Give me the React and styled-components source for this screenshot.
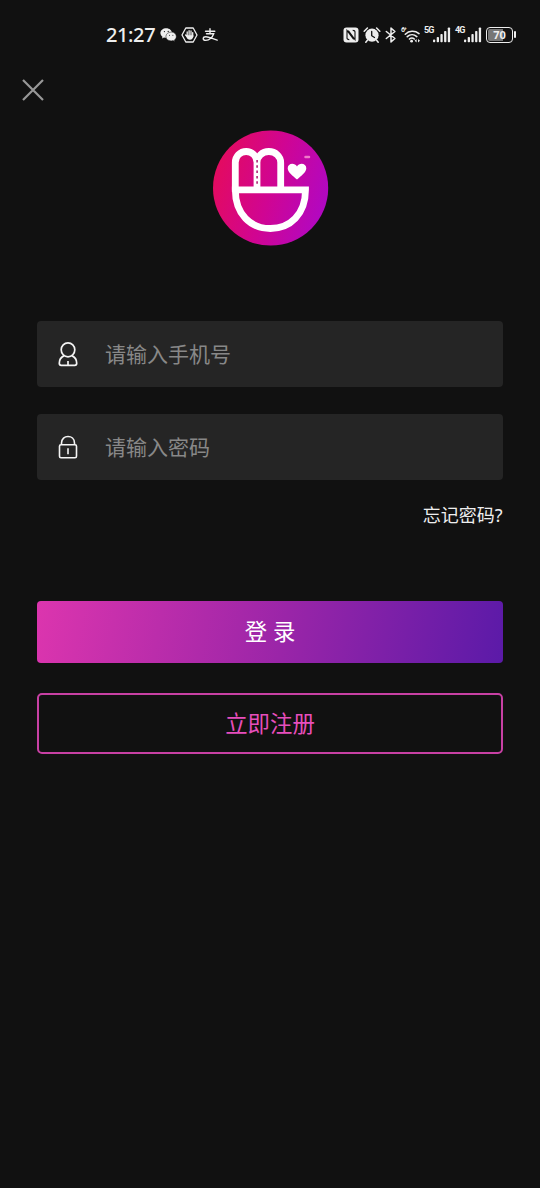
import React, { useState } from "react";
import styled, { createGlobalStyle } from "styled-components";

function SignalIcon() {
  return (
    <svg width="18" height="16" viewBox="0 0 18 16" fill="#eee">
      <rect x="0" y="12.5" width="2.2" height="2.7" rx="0.8" />
      <rect x="3.7" y="10" width="2.3" height="5.2" rx="0.8" />
      <rect x="7.4" y="7" width="2.3" height="8.2" rx="0.8" />
      <rect x="11.1" y="4" width="2.3" height="11.2" rx="0.8" />
      <rect x="14.8" y="0.5" width="2.3" height="14.7" rx="0.8" />
    </svg>
  );
}

function StatusBar() {
  return (
    <Status>
      <Clock>21:27</Clock>
      <NoticeIcons>
        {/* wechat */}
        <svg width="17" height="16" viewBox="0 0 17 16">
          <path
            d="M6.3 1.2C3 1.2.4 3.3.4 6c0 1.5.8 2.8 2.1 3.7L2 11.4l2-1c.7.2 1.5.3 2.3.3C9.5 10.7 12 8.6 12 6S9.5 1.2 6.3 1.2z"
            fill="#eee"
          />
          <path
            d="M11.2 5.1c-3 0-5.3 1.9-5.3 4.4s2.3 4.4 5.3 4.4c.7 0 1.3-.1 1.9-.3l1.7.9-.4-1.5c1.2-.8 1.9-2 1.9-3.5 0-2.5-2.2-4.4-5.1-4.4z"
            fill="#eee"
            stroke="#111"
            strokeWidth="0.5"
          />
          <g fill="#111">
            <circle cx="4.4" cy="4.6" r="0.6" />
            <circle cx="8.2" cy="4.4" r="0.6" />
            <circle cx="9.5" cy="8.3" r="0.5" />
            <circle cx="12.9" cy="8.3" r="0.5" />
          </g>
        </svg>
        {/* hand in hexagon */}
        <svg width="17" height="16" viewBox="0 0 17 16">
          <path
            d="M4.8 1h7.4L16 8l-3.8 7H4.8L1 8z"
            fill="none"
            stroke="#eee"
            strokeWidth="1.3"
            strokeLinejoin="round"
          />
          <path
            d="M6.2 5v4M8.1 3.7v5M10 4v5M11.7 5.6v4M4.6 8l1.8 2"
            fill="none"
            stroke="#eee"
            strokeWidth="1.3"
            strokeLinecap="round"
          />
          <path d="M5.5 8.2h6.9c0 2.8-1.3 4.5-3.5 4.5-1.8 0-2.8-1.1-3.4-2.8z" fill="#eee" />
        </svg>
        {/* alipay */}
        <svg
          width="16"
          height="16"
          viewBox="0 0 16 16"
          fill="none"
          stroke="#eee"
          strokeWidth="1.4"
          strokeLinecap="round"
        >
          <path d="M3.5 4.2h9.300M8 1.700v5M4.500 6.800h7.200C10.600 10 7.600 13.400 3.700 13.400c-3.300 0-3.300-3.600.2-3.600 3.500 0 7 2.300 11.300 3.300" />
        </svg>
      </NoticeIcons>
      <SystemIcons>
        {/* nfc */}
        <svg width="16" height="16" viewBox="0 0 16 16">
          <rect x="0.5" y="0.5" width="15" height="15" rx="3" fill="#eee" />
          <path
            d="M6.3 12.6c-1.5 0-2.3-.4-2.3-1.6V3.400l6.700 8.900M9.700 3.400c1.600 0 2.300.4 2.300 1.600v7.600L5.300 3.700"
            fill="none"
            stroke="#111"
            strokeWidth="1.1"
          />
        </svg>
        {/* alarm */}
        <svg width="18" height="16" viewBox="0 0 18 16">
          <circle cx="9" cy="8.2" r="6.6" fill="#eee" />
          <path
            d="M1.2 4.2L4.4 1M16.8 4.2L13.6 1M4.4 13.2l-1.6 2M13.6 13.2l1.6 2"
            stroke="#eee"
            strokeWidth="1.5"
            strokeLinecap="round"
          />
          <path
            d="M8.7 4.5v4.200l2.800 1.800"
            fill="none"
            stroke="#111"
            strokeWidth="1.3"
            strokeLinecap="round"
          />
        </svg>
        {/* bluetooth */}
        <svg width="12" height="16" viewBox="0 0 12 16">
          <path
            d="M1.3 4.5l8.6 7L6 14.900V1.100l3.900 3.400-8.600 7"
            fill="none"
            stroke="#eee"
            strokeWidth="1.5"
            strokeLinejoin="round"
            strokeLinecap="round"
          />
        </svg>
        <Network>
          <Tag $width={2} $size={7}>6⁺</Tag>
          <svg width="17" height="16" viewBox="0 0 17 16">
            <path
              d="M2.300 7.200C6 3.600 11.800 3.300 16 6.600M4.300 9.700c2.700-2.500 6.700-2.500 9.500-.1M6.500 12c1.500-1.300 3.300-1.300 4.800 0"
              fill="none"
              stroke="#eee"
              strokeWidth="1.6"
              strokeLinecap="round"
            />
            <circle cx="8.6" cy="14.2" r="1.4" fill="#eee" />
            <path d="M11.6 13.700l2-1.700v3.400zM17 13.700l-2-1.700v3.400z" fill="#eee" />
          </svg>
        </Network>
        <Network>
          <Tag $width={9} $size={9}>5G</Tag>
          <SignalIcon />
        </Network>
        <Network>
          <Tag $width={9} $size={9}>4G</Tag>
          <SignalIcon />
        </Network>
        <BatteryBox>
          <Battery>70</Battery>
          <BatteryTip />
        </BatteryBox>
      </SystemIcons>
    </Status>
  );
}

function Logo() {
  return (
    <svg width="116" height="116" viewBox="0 0 116 116">
      <defs>
        <linearGradient id="logoBg" x1="0" y1="0.35" x2="1" y2="0.65">
          <stop offset="0" stopColor="#e40b5e" />
          <stop offset="0.5" stopColor="#d00592" />
          <stop offset="1" stopColor="#b008c4" />
        </linearGradient>
      </defs>
      <circle cx="57.6" cy="58" r="57.6" fill="url(#logoBg)" />
      <g fill="none" stroke="#fff" strokeWidth="6.8">
        <path d="M22.3 62V32.500a10.850 11 0 0 1 21.700 0V59V32.500a11.850 11 0 0 1 23.700 0V59" />
        <path d="M22.3 59.800h70.200C92.500 84.500 77 98.500 57.400 98.500S22.300 84.500 22.300 59.800z" />
      </g>
      <path
        d="M44.1 30v26"
        stroke="#a8146a"
        strokeWidth="1.5"
        strokeDasharray="2.5 2.8"
      />
      <path
        d="M84 49.500C80 45.800 74.700 42.500 74.700 38.200c0-5.500 7.200-6 9.300-1.700 2-4.300 9.300-3.800 9.300 1.700 0 4.300-5.300 7.600-9.300 11.300z"
        fill="#fff"
      />
      <path d="M92.500 27h3.500" stroke="#f07ac8" strokeWidth="2.500" strokeLinecap="round" />
    </svg>
  );
}

function App() {
  const [phone, setPhone] = useState("");
  const [password, setPassword] = useState("");

  return (
    <Page>
      <GlobalStyle />
      <StatusBar />
      <NavBar>
        <CloseBtn aria-label="关闭">
          <svg width="22" height="22" viewBox="0 0 22 22">
            <path d="M1 1l20 20M21 1L1 21" stroke="#989898" strokeWidth="2.2" />
          </svg>
        </CloseBtn>
      </NavBar>
      <LogoBox>
        <Logo />
      </LogoBox>
      <Form onSubmit={(e) => e.preventDefault()}>
        <Field>
          <svg
            width="20"
            height="26"
            viewBox="0 0 20 26"
            fill="none"
            stroke="#f4f4f4"
            strokeWidth="1.7"
          >
            <ellipse cx="10" cy="8.800" rx="6.800" ry="7" />
            <path
              d="M6.200 14.600C2.900 16 1.300 18.300 1.300 22.300c0 1.400.5 2 1.900 2h13.600c1.400 0 1.900-.6 1.900-2 0-4-1.600-6.300-4.900-7.700M10 20v4.300"
              strokeLinejoin="round"
            />
          </svg>
          <Input
            placeholder="请输入手机号"
            value={phone}
            onChange={(e) => setPhone(e.target.value)}
          />
        </Field>
        <Field>
          <svg
            width="20"
            height="26"
            viewBox="0 0 20 26"
            fill="none"
            stroke="#f4f4f4"
            strokeWidth="1.6"
          >
            <rect x="1.500" y="10.800" width="17" height="13" rx="1.500" />
            <path d="M3.500 10.800V9.100c0-8.900 13-8.900 13 0v1.700M10 14.300v6" />
          </svg>
          <Input
            type="password"
            placeholder="请输入密码"
            value={password}
            onChange={(e) => setPassword(e.target.value)}
          />
        </Field>
        <Forgot type="button">忘记密码?</Forgot>
        <LoginBtn>登 录</LoginBtn>
        <RegisterBtn type="button">立即注册</RegisterBtn>
      </Form>
    </Page>
  );
}

export default App;

const GlobalStyle = createGlobalStyle`
  * {
    box-sizing: border-box;
  }

  body {
    margin: 0;
    background-color: #111111;
  }

  body, input, button {
    font-family: "Noto Sans", "Noto Sans CJK SC", sans-serif;
  }

  svg {
    display: block;
    flex-shrink: 0;
  }
`;

const Page = styled.div`
  display: flex;
  flex-direction: column;
  width: 540px;
  height: 1188px;
  background-color: #111111;
  overflow: hidden;
`;

const Status = styled.div`
  display: flex;
  align-items: center;
  height: 68px;
  padding: 1px 24px 0 106px;
  color: #eeeeee;
`;

const Clock = styled.span`
  width: 54px;
  font-size: 20px;
  font-weight: 500;
  line-height: 24px;
  letter-spacing: -0.4px;
`;

const NoticeIcons = styled.div`
  display: flex;
  gap: 4px;
`;

const SystemIcons = styled.div`
  display: flex;
  align-items: center;
  gap: 4px;
  margin-left: auto;
`;

const Network = styled.div`
  display: flex;
  height: 16px;
`;

const Tag = styled.span`
  width: ${(prop) => prop.$width}px;
  margin-top: -2px;
  font-family: "Roboto", sans-serif;
  font-size: ${(prop) => prop.$size}px;
  font-weight: 700;
  line-height: 10px;
  letter-spacing: -1px;
  white-space: nowrap;
`;

const BatteryBox = styled.div`
  display: flex;
  align-items: center;
  gap: 1px;
`;

const Battery = styled.div`
  width: 27px;
  height: 16px;
  border: 1.5px solid #eeeeee;
  border-radius: 4px;
  background: linear-gradient(90deg, #777777 65%, #111111 65%) content-box;
  padding: 1px;
  font-size: 11px;
  font-weight: 700;
  line-height: 12px;
  text-align: center;
`;

const BatteryTip = styled.div`
  width: 2px;
  height: 7px;
  border-radius: 1px;
  background-color: #eeeeee;
`;

const NavBar = styled.div`
  display: flex;
  align-items: center;
  height: 43px;
  padding-left: 22px;
`;

const CloseBtn = styled.button`
  padding: 0;
  border: none;
  background: none;
`;

const LogoBox = styled.div`
  display: flex;
  justify-content: center;
  padding: 19px 0 75px 1px;
`;

const Form = styled.form`
  display: flex;
  flex-direction: column;
  padding: 0 37.4px;
`;

const Field = styled.label`
  display: flex;
  align-items: center;
  height: 66px;
  margin-bottom: 27px;
  padding-left: 20.6px;
  border-radius: 4px;
  background-color: #252525;
`;

const Input = styled.input`
  flex: 1;
  margin-left: 27px;
  padding: 0;
  border: none;
  outline: none;
  background: none;
  color: #ffffff;
  font-size: 21px;

  &::placeholder {
    color: #888888;
    opacity: 1;
  }
`;

const Forgot = styled.button`
  align-self: flex-end;
  height: 26px;
  margin-top: -5px;
  margin-bottom: 73px;
  padding: 0;
  border: none;
  background: none;
  color: #eeeeee;
  font-size: 18px;
  line-height: 26px;
`;

const Btn = styled.button`
  padding: 0;
  border-radius: 4px;
  font-size: 22.4px;
  line-height: 30px;
`;

const LoginBtn = styled(Btn)`
  height: 62px;
  border: none;
  background: linear-gradient(100deg, #dc35ae 0%, #9a25a8 53%, #5b1aa8 100%);
  color: #ffffff;
`;

const RegisterBtn = styled(Btn)`
  height: 61px;
  margin-top: 30px;
  border: 2px solid #c840a4;
  border-radius: 5px;
  background: none;
  color: #e64ebc;
`;
